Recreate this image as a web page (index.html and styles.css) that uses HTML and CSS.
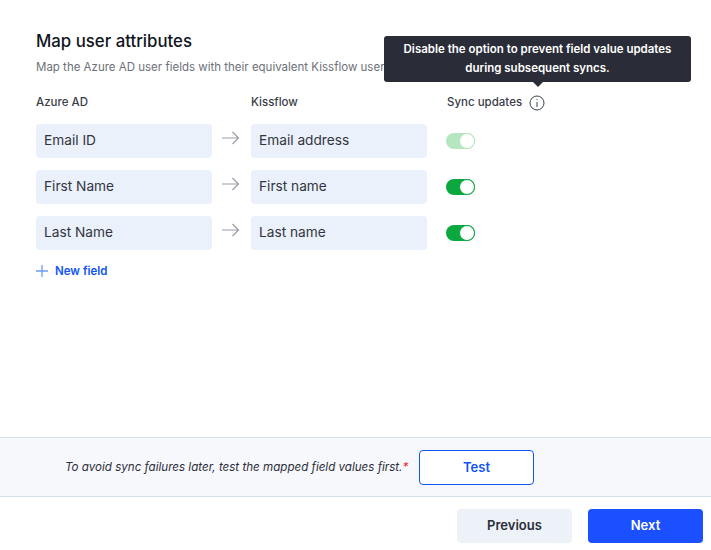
FILE: index.html
```html
<!DOCTYPE html>
<html lang="en">
<head>
<meta charset="utf-8">
<title>Map user attributes</title>
<link rel="stylesheet" href="styles.css">
</head>
<body>
<div class="page">
  <main class="content">
    <h1 class="title">Map user attributes</h1>
    <p class="subtitle">Map the Azure AD user fields with their equivalent Kissflow user fields.</p>
    <div class="grid">
      <div class="head">Azure AD</div>
      <div></div>
      <div class="head">Kissflow</div>
      <div class="head sync">Sync updates
        <svg class="info" width="16" height="16" viewBox="0 0 16 16" fill="none" stroke="#3d4250" stroke-width="1"><circle cx="8" cy="8" r="7"/><path d="M8 7v5M8 4.2v1"/></svg>
      </div>

      <div class="field">Email ID</div>
      <svg class="arrow" width="20" height="14" viewBox="0 0 20 14" fill="none" stroke="#9c9ea7" stroke-width="1.2"><path d="M1 7h16.5M11.500 1l6 6-6 6"/></svg>
      <div class="field">Email address</div>
      <div class="toggle disabled"><span class="knob"></span></div>

      <div class="field">First Name</div>
      <svg class="arrow" width="20" height="14" viewBox="0 0 20 14" fill="none" stroke="#9c9ea7" stroke-width="1.2"><path d="M1 7h16.5M11.500 1l6 6-6 6"/></svg>
      <div class="field">First name</div>
      <div class="toggle"><span class="knob"></span></div>

      <div class="field">Last Name</div>
      <svg class="arrow" width="20" height="14" viewBox="0 0 20 14" fill="none" stroke="#9c9ea7" stroke-width="1.2"><path d="M1 7h16.5M11.500 1l6 6-6 6"/></svg>
      <div class="field">Last name</div>
      <div class="toggle"><span class="knob"></span></div>
    </div>
    <a class="add" href="#">
      <svg width="12" height="12" viewBox="0 0 12 12" fill="none" stroke="#6d9bf5" stroke-width="1.300"><path d="M6 0v12M0 6h12"/></svg>
      New field
    </a>
    <div class="tooltip">Disable the option to prevent field value updates during subsequent syncs.</div>
  </main>
  <section class="testbar">
    <span class="note">To avoid sync failures later, test the mapped field values first.<span class="req">*</span></span>
    <button class="btn-test">Test</button>
  </section>
  <footer class="footer">
    <button class="btn prev">Previous</button>
    <button class="btn next">Next</button>
  </footer>
</div>
</body>
</html>
```
FILE: styles.css
```css
* { box-sizing: border-box; }
html, body { margin: 0; padding: 0; background: #fff; }
body { font-family: Inter, "Liberation Sans", sans-serif; color: #2b2e3a; }
.page { width: 711px; height: 550px; display: flex; flex-direction: column; overflow: hidden; }
.content { position: relative; flex: 1; padding: 30px 0 0 36px; }
.title { margin: 0; font-size: 16.800px; line-height: 22px; font-weight: 500; color: #111522; }
.subtitle { margin: 7px 0 0; font-size: 11.500px; line-height: 16px; color: #6d7079; white-space: nowrap; }
.grid { display: grid; grid-template-columns: 176px 39px 176px 1fr; grid-template-rows: 24px repeat(3, 34px); row-gap: 12px; margin-top: 13px; align-items: center; }
.grid > .head { height: 16px; font-size: 11.500px; line-height: 16px; font-weight: 500; color: #3a3d49; align-self: start; margin-top: 6px; }
.grid > .sync { display: flex; align-items: center; gap: 7px; padding-left: 20px; white-space: nowrap; }
.info { margin-top: 2px; }
.field { height: 34px; background: #ebf1fa; border-radius: 4px; padding-left: 8px; font-size: 13.700px; line-height: 33px; color: #32353f; }
.arrow { justify-self: center; margin: -6px 0 0 -2px; }
.toggle { width: 29px; height: 16px; margin-left: 19px; background: #0aa83f; border-radius: 8px; position: relative; }
.toggle.disabled { background: #b6e6bf; }
.knob { position: absolute; right: 0; top: 0; width: 16px; height: 16px; background: #fff; border: 1px solid #0aa83f; border-radius: 50%; }
.toggle.disabled .knob { border-color: #b6e6bf; }
.add { display: flex; align-items: center; gap: 7px; margin-top: 13px; font-size: 11.500px; line-height: 16px; font-weight: 600; color: #0f55f5; text-decoration: none; }
.tooltip { position: absolute; left: 384px; top: 36px; width: 307px; height: 46px; background: #2a2c38; border-radius: 3px; color: #fff; font-size: 11.500px; font-weight: 600; line-height: 19px; text-align: center; padding: 4px 15px 0; }
.tooltip::after { content: ""; position: absolute; left: 149px; top: 46px; border-left: 5px solid transparent; border-right: 5px solid transparent; border-top: 5px solid #2a2c38; }
.testbar { height: 60px; background: #f7f8fc; border-top: 1px solid #d5deeb; border-bottom: 1px solid #d5deeb; display: flex; align-items: center; padding-left: 65px; }
.note { font-size: 11.600px; font-style: italic; color: #2b2e3a; width: 354px; white-space: nowrap; }
.req { color: #e8262a; }
.btn-test { width: 115px; height: 35px; background: #fff; border: 1px solid #0f55f5; border-radius: 4px; color: #0f55f5; font: 600 13px Inter, "Liberation Sans", sans-serif; }
.footer { height: 53px; display: flex; justify-content: flex-end; gap: 16px; padding: 12px 8px 0 0; }
.btn { width: 115px; height: 34px; border: 0; border-radius: 4px; padding-bottom: 3px; font: 600 13px Inter, "Liberation Sans", sans-serif; }
.prev { background: #edf1f8; color: #2b2e3a; }
.next { background: #1a50ff; color: #fff; }
```
